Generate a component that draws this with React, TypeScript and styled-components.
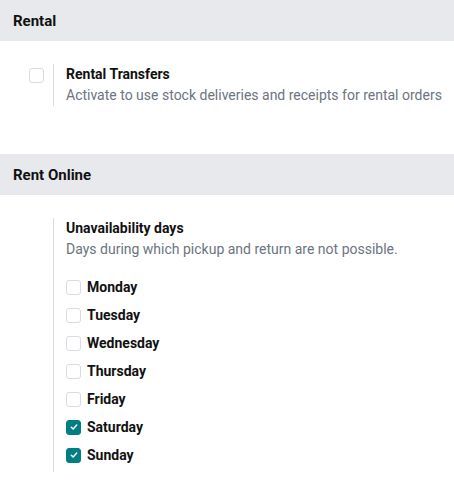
import styled, { createGlobalStyle } from "styled-components";

const GlobalStyle = createGlobalStyle`
  body {
    margin: 0;
    background: #fff;
    font-family: Roboto, "Noto Sans", sans-serif;
    color: #1f2328;
  }
`;

const Page = styled.div`
  width: 454px;
  display: flex;
  flex-direction: column;
`;

/*----------------------------------
	Section header
----------------------------------*/
const Header = styled.h2`
  margin: 0;
  height: 41px;
  padding-left: 13px;
  display: flex;
  align-items: center;
  background: #e7e9ed;
  font-size: 15px;
  font-weight: 700;
  color: #111;
`;

const Section = styled.section<{ $top: number; $bottom: number }>`
  padding: ${(p) => p.$top}px 0 ${(p) => p.$bottom}px;
`;

/*----------------------------------
	Setting box
----------------------------------*/
const SettingRow = styled.div`
  display: flex;
`;

const LeftPane = styled.div`
  width: 53px;
  box-sizing: border-box;
  padding: 4px 0 0 29px;
  flex-shrink: 0;
`;

const RightPane = styled.div<{ $bottom?: number }>`
  border-left: 1px solid #d8dadd;
  padding: 0 0 ${(p) => p.$bottom ?? 0}px 12px;
  display: flex;
  flex-direction: column;
`;

const Title = styled.div`
  font-size: 14px;
  font-weight: 700;
  line-height: 21px;
  color: #111;
`;

const Help = styled.div`
  font-size: 14px;
  line-height: 21px;
  color: #6c7480;
`;

const Check = styled.span<{ $on?: boolean }>`
  width: 15px;
  height: 15px;
  box-sizing: border-box;
  border-radius: 3px;
  border: 1px solid ${(p) => (p.$on ? "#017e84" : "#d8dbe0")};
  background: ${(p) => (p.$on ? "#017e84" : "#fff")};
  display: inline-flex;
  align-items: center;
  justify-content: center;
  flex-shrink: 0;
`;

const DayList = styled.div`
  margin-top: 13px;
  display: flex;
  flex-direction: column;
`;

const Day = styled.label`
  height: 28px;
  display: flex;
  align-items: center;
  gap: 6px;
  font-size: 14px;
  font-weight: 700;
  color: #111;
`;

const Checkbox = ({ on }: { on?: boolean }) => (
  <Check $on={on}>
    {on && (
      <svg width="8" height="8" viewBox="0 0 8 8">
        <path
          d="M1.3 4.2 L3.2 6 L6.7 2"
          fill="none"
          stroke="#fff"
          strokeWidth="1.5"
          strokeLinecap="round"
          strokeLinejoin="round"
        />
      </svg>
    )}
  </Check>
);

const days = [
  { name: "Monday", on: false },
  { name: "Tuesday", on: false },
  { name: "Wednesday", on: false },
  { name: "Thursday", on: false },
  { name: "Friday", on: false },
  { name: "Saturday", on: true },
  { name: "Sunday", on: true },
];

const App = () => {
  return (
    <Page>
      <GlobalStyle />
      <Header>Rental</Header>
      <Section $top={23} $bottom={48}>
        <SettingRow>
          <LeftPane>
            <Checkbox />
          </LeftPane>
          <RightPane>
            <Title>Rental Transfers</Title>
            <Help>Activate to use stock deliveries and receipts for rental orders</Help>
          </RightPane>
        </SettingRow>
      </Section>
      <Header>Rent Online</Header>
      <Section $top={23} $bottom={10}>
        <SettingRow>
          <LeftPane />
          <RightPane $bottom={3}>
            <Title>Unavailability days</Title>
            <Help>Days during which pickup and return are not possible.</Help>
            <DayList>
              {days.map((d) => (
                <Day key={d.name}>
                  <Checkbox on={d.on} />
                  {d.name}
                </Day>
              ))}
            </DayList>
          </RightPane>
        </SettingRow>
      </Section>
    </Page>
  );
};

export default App;
